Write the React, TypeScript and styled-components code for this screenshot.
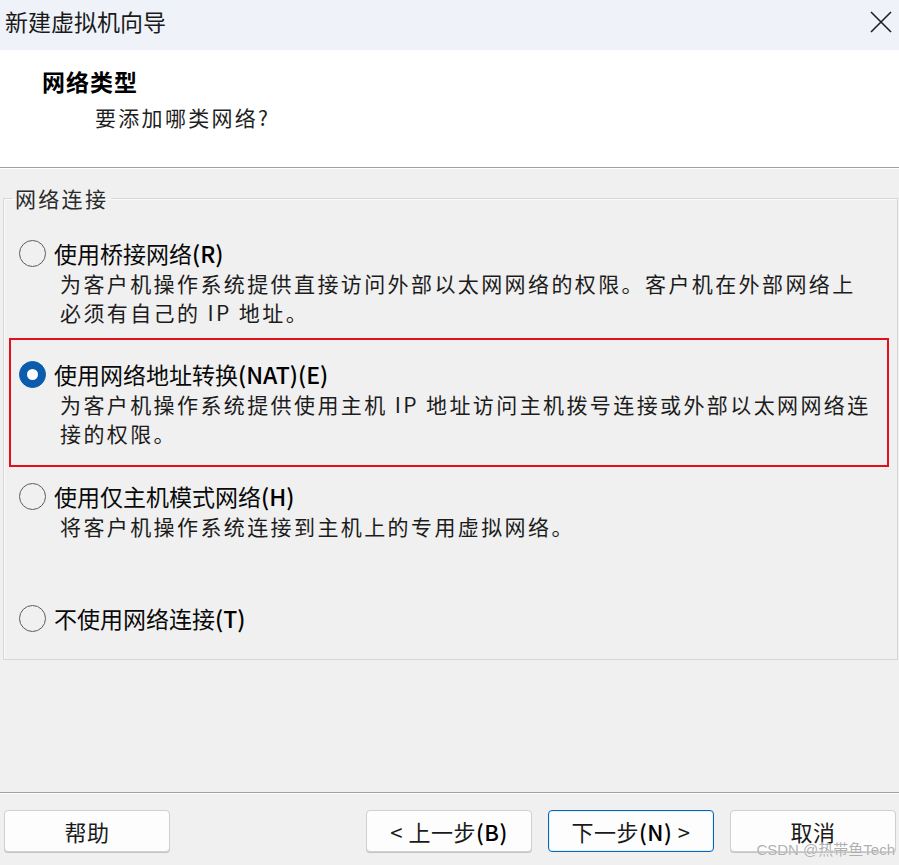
import React from "react";
import styled, { createGlobalStyle, css } from "styled-components";

const GlobalStyle = createGlobalStyle`
  html, body {
    margin: 0;
    padding: 0;
    background: #f0f0f0;
  }
  * { box-sizing: border-box; }
`;

const FONT = `"Noto Sans CJK SC", "Noto Sans", "Liberation Sans", sans-serif`;

const Window = styled.div`
  position: relative;
  width: 899px;
  height: 865px;
  display: flex;
  flex-direction: column;
  background: #f0f0f0;
  font-family: ${FONT};
  color: #111;
  overflow: hidden;
`;

const TitleBar = styled.div`
  height: 50px;
  flex: 0 0 50px;
  background: #eff2f8;
  display: flex;
  align-items: flex-start;
  justify-content: space-between;
  padding: 6px 6px 0 5px;
`;

const TitleText = styled.div`
  font-size: 23px;
  line-height: 30px;
  color: #1a1a1a;
`;

const CloseButton = styled.button`
  width: 24px;
  height: 24px;
  margin-top: 4px;
  padding: 0;
  border: none;
  background: transparent;
  display: flex;
  align-items: center;
  justify-content: center;
`;

const Header = styled.div`
  flex: 0 0 118px;
  background: #ffffff;
  padding: 16px 0 0 42px;
  border-bottom: 1px solid #a0a0a0;
  box-shadow: 0 1px 0 #ffffff;
`;

const HeaderTitle = styled.div`
  font-size: 23px;
  font-weight: 700;
  line-height: 30px;
  letter-spacing: 1px;
  color: #000;
`;

const HeaderSubtitle = styled.div`
  margin-top: 6px;
  padding-left: 53px;
  font-size: 21px;
  line-height: 30px;
  letter-spacing: 2.3px;
  color: #1e1e1e;
`;

const Body = styled.div`
  flex: 1 1 auto;
  padding: 15px 1px 0 3px;
`;

const Group = styled.fieldset`
  margin: 0;
  padding: 25px 0 26px 0;
  border: 1px solid #d6d6d6;
  box-shadow: inset 1px 1px 0 #fafafa;
  min-width: 0;
`;

const GroupLegend = styled.legend`
  margin-left: 8px;
  padding: 0 3px;
  font-size: 21px;
  line-height: 30px;
  letter-spacing: 2.3px;
  color: #2a2a2a;
`;

const Option = styled.div<{ $top?: number }>`
  padding-left: 15px;
  margin-top: ${(p) => p.$top ?? 0}px;
`;

const Highlight = styled.div`
  margin: 11px 8px 0 5px;
  border: 2px solid #e3101c;
  padding: 19px 0 17px 0;

  ${Option} {
    padding-left: 8px;
  }
`;

const OptionRow = styled.label`
  display: flex;
  align-items: center;
  gap: 8px;
  font-size: 23px;
  line-height: 30px;
  color: #0a0a0a;
  white-space: nowrap;
  cursor: default;
`;

const Accel = styled.span`
  font-weight: 500;
  color: #000;
`;

const RadioMark = styled.span<{ $checked?: boolean }>`
  position: relative;
  flex: 0 0 27px;
  width: 27px;
  height: 27px;
  border-radius: 50%;
  ${(p) =>
    p.$checked
      ? css`
          background: #0b5cad;
          border: 1px solid #0b5cad;
          &::after {
            content: "";
            position: absolute;
            left: 50%;
            top: 50%;
            width: 11px;
            height: 11px;
            margin: -5.5px 0 0 -5.5px;
            border-radius: 50%;
            background: #ffffff;
          }
        `
      : css`
          background: transparent;
          border: 1.6px solid #5c5c5c;
        `}
`;

const Description = styled.div`
  margin-top: 1px;
  padding-left: 41px;
  font-size: 21px;
  line-height: 29px;
  letter-spacing: 2.4px;
  color: #1c1c1c;
  white-space: nowrap;
`;

const FooterSeparator = styled.div`
  flex: 0 0 2px;
  border-top: 1px solid #a0a0a0;
  border-bottom: 1px solid #ffffff;
`;

const Footer = styled.div`
  flex: 0 0 71px;
  display: flex;
  justify-content: space-between;
  align-items: flex-start;
  padding: 16px 3px 0 4px;
`;

const ButtonGroup = styled.div`
  display: flex;
  gap: 16px;
`;

const DialogButton = styled.button<{ $primary?: boolean }>`
  width: 166px;
  height: 42px;
  border-radius: 4px;
  background: #fdfdfd;
  border: 1px solid ${(p) => (p.$primary ? "#0067c0" : "#d0d0d0")};
  box-shadow: ${(p) => (p.$primary ? "inset 0 0 0 1px #e6eef8" : "0 1px 0 #c4c4c4")};
  font-family: ${FONT};
  font-size: 22px;
  line-height: 28px;
  letter-spacing: 0.5px;
  color: #1a1a1a;
  padding: 0;
`;

const Watermark = styled.div`
  position: absolute;
  right: 4px;
  bottom: 6px;
  font-family: "Liberation Sans", "Noto Sans CJK SC", sans-serif;
  font-size: 15px;
  line-height: 18px;
  color: rgba(150, 150, 150, 0.75);
  text-shadow: 0 0 1px #ffffff;
  pointer-events: none;
`;

type Opt = {
  label: string;
  accel: string;
  lines?: string[];
  checked?: boolean;
};

const RadioOption: React.FC<Opt & { top?: number }> = ({ label, accel, lines, checked, top }) => (
  <Option $top={top}>
    <OptionRow>
      <RadioMark $checked={checked} />
      <span>
        {label}
        <Accel>{accel}</Accel>
      </span>
    </OptionRow>
    {lines && (
      <Description>
        {lines.map((l, i) => (
          <div key={i}>{l}</div>
        ))}
      </Description>
    )}
  </Option>
);

export default function App() {
  return (
    <>
      <GlobalStyle />
      <Window>
        <TitleBar>
          <TitleText>新建虚拟机向导</TitleText>
          <CloseButton aria-label="关闭">
            <svg width="22" height="22" viewBox="0 0 22 22">
              <path d="M1 1 L21 21 M21 1 L1 21" stroke="#1f1f1f" strokeWidth="1.6" fill="none" />
            </svg>
          </CloseButton>
        </TitleBar>
        <Header>
          <HeaderTitle>网络类型</HeaderTitle>
          <HeaderSubtitle>要添加哪类网络?</HeaderSubtitle>
        </Header>
        <Body>
          <Group>
            <GroupLegend>网络连接</GroupLegend>
            <RadioOption
              label="使用桥接网络"
              accel="(R)"
              lines={[
                "为客户机操作系统提供直接访问外部以太网网络的权限。客户机在外部网络上",
                "必须有自己的 IP 地址。",
              ]}
            />
            <Highlight>
              <RadioOption
                checked
                label="使用网络地址转换"
                accel="(NAT)(E)"
                lines={[
                  "为客户机操作系统提供使用主机 IP 地址访问主机拨号连接或外部以太网网络连",
                  "接的权限。",
                ]}
              />
            </Highlight>
            <RadioOption
              top={14}
              label="使用仅主机模式网络"
              accel="(H)"
              lines={["将客户机操作系统连接到主机上的专用虚拟网络。"]}
            />
            <RadioOption top={62} label="不使用网络连接" accel="(T)" />
          </Group>
        </Body>
        <FooterSeparator />
        <Footer>
          <DialogButton>帮助</DialogButton>
          <ButtonGroup>
            <DialogButton>
              &lt; 上一步<Accel>(B)</Accel>
            </DialogButton>
            <DialogButton $primary>
              下一步<Accel>(N)</Accel> &gt;
            </DialogButton>
            <DialogButton>取消</DialogButton>
          </ButtonGroup>
        </Footer>
        <Watermark>CSDN @热带鱼Tech</Watermark>
      </Window>
    </>
  );
}
